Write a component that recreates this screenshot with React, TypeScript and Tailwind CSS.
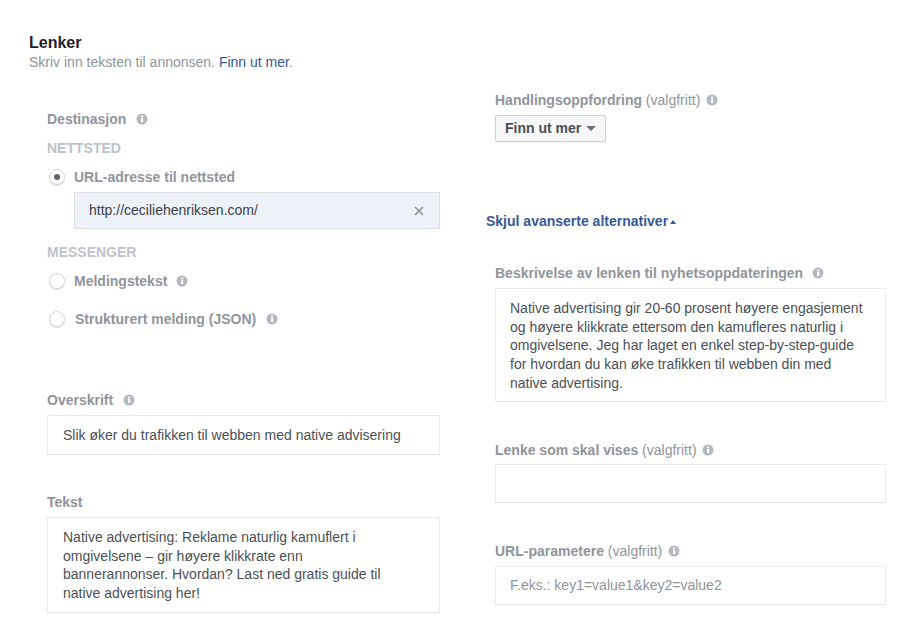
import React from "react";

function Info({ className = "" }: { className?: string }) {
  return (
    <svg width="12" height="12" viewBox="0 0 12 12" className={`inline-block shrink-0 ${className}`}>
      <circle cx="6" cy="6" r="5.5" fill="#b4b8c0" />
      <rect x="5" y="5" width="2.2" height="4" fill="#fff" />
      <rect x="5" y="2.6" width="2.2" height="1.7" fill="#fff" />
    </svg>
  );
}

function Radio({ checked = false }: { checked?: boolean }) {
  return (
    <span className="w-[16px] h-[16px] rounded-full bg-white border border-[#d5d7dc] shadow-[0_1px_1px_rgba(0,0,0,0.12)] flex items-center justify-center shrink-0">
      {checked && <span className="w-[6px] h-[6px] rounded-full bg-[#5b6270]" />}
    </span>
  );
}

function Label({ children, className = "" }: { children: React.ReactNode; className?: string }) {
  return (
    <div className={`flex items-center h-[16px] text-[14px] font-bold text-[#90949c] whitespace-nowrap ${className}`}>
      {children}
    </div>
  );
}

function Opt() {
  return <span className="font-normal whitespace-pre"> (valgfritt)</span>;
}

function Box({ children, className = "" }: { children?: React.ReactNode; className?: string }) {
  return (
    <div className={`border border-[#e9eaed] border-b-[#e3e4e8] bg-white text-[14px] text-[#4b4f56] ${className}`}>
      {children}
    </div>
  );
}

export default function App() {
  return (
    <div className="w-[899px] h-[633px] overflow-hidden bg-white font-['Liberation_Sans',Arial,sans-serif] relative">
      <div className="pt-[35px] pl-[29px]">
        <div className="text-[16px] leading-[16px] font-bold text-[#1d2129]">Lenker</div>
        <div className="text-[14px] leading-[14px] mt-[4px] text-[#90949c]">
          Skriv inn teksten til annonsen. <span className="text-[#365899]">Finn ut mer</span>.
        </div>
      </div>

      <div className="flex h-[564px]">
        {/* left column */}
        <div className="w-[393px] ml-[47px] shrink-0 pt-[42px]">
          <Label>
            Destinasjon <Info className="ml-[10px]" />
          </Label>
          <Label className="mt-[13px] text-[#bec2c9]">NETTSTED</Label>
          <div className="flex items-center h-[16px] mt-[13px] ml-[2px] text-[14px] font-bold text-[#90949c]">
            <Radio checked />
            <span className="ml-[9px]">URL-adresse til nettsted</span>
          </div>
          <div className="ml-[27px] mt-[7px] h-[37px] bg-[#edf1f8] border border-[#dddfe2] flex items-center justify-between pl-[14px] pr-[15px] text-[14px] text-[#3e424a]">
            <span>http://ceciliehenriksen.com/</span>
            <svg width="10" height="10" viewBox="0 0 10 10">
              <path d="M1 1L9 9M9 1L1 9" stroke="#8f939b" strokeWidth="1.7" />
            </svg>
          </div>
          <Label className="mt-[15px] text-[#bec2c9]">MESSENGER</Label>
          <div className="flex items-center h-[16px] mt-[13px] ml-[2px] text-[14px] font-bold text-[#90949c]">
            <Radio />
            <span className="ml-[9px]">Meldingstekst</span>
            <Info className="ml-[9px]" />
          </div>
          <div className="flex items-center h-[16px] mt-[22px] ml-[2px] text-[14px] font-bold text-[#90949c]">
            <Radio />
            <span className="ml-[10px]">Strukturert melding (JSON)</span>
            <Info className="ml-[10px]" />
          </div>

          <Label className="mt-[65px]">
            Overskrift <Info className="ml-[10px]" />
          </Label>
          <Box className="mt-[7px] h-[40px] flex items-center pl-[15px]">
            Slik øker du trafikken til webben med native advisering
          </Box>

          <Label className="mt-[39px]">Tekst</Label>
          <Box className="mt-[7px] h-[96px] pt-[10px] pl-[15px] pr-[30px] leading-[18.7px]">
            Native advertising: Reklame naturlig kamuflert i omgivelsene – gir høyere klikkrate enn bannerannonser. Hvordan? Last ned gratis guide til native advertising her!
          </Box>
        </div>

        {/* right column */}
        <div className="w-[400px] ml-[46px] shrink-0 pt-[23px]">
          <div className="ml-[9px] w-[391px]">
            <Label>
              Handlingsoppfordring
              <Opt />
              <Info className="ml-[6px]" />
            </Label>
            <div className="mt-[7px] w-[111px] h-[27px] bg-[#f6f7f9] border border-[#ced0d4] rounded-[2px] flex items-center pl-[9px] text-[14px] font-bold text-[#4b4f56] shadow-[0_1px_1px_rgba(0,0,0,0.06)]">
              Finn ut mer
              <svg width="10" height="5" viewBox="0 0 10 5" className="ml-[5px]">
                <path d="M0 0H10L5 5Z" fill="#6b7079" />
              </svg>
            </div>
          </div>

          <div className="mt-[71px] h-[16px] flex items-center text-[14px] font-bold text-[#365899]">
            Skjul avanserte alternativer
            <svg width="6" height="4" viewBox="0 0 6 4" className="ml-[2px] mt-[1px]">
              <path d="M0 4H6L3 0Z" fill="#365899" />
            </svg>
          </div>

          <div className="ml-[9px] w-[391px]">
            <Label className="mt-[36px]">
              Beskrivelse av lenken til nyhetsoppdateringen <Info className="ml-[9px]" />
            </Label>
            <Box className="mt-[7px] h-[114px] pt-[10px] pl-[14px] pr-[20px] leading-[18.7px]">
              Native advertising gir 20-60 prosent høyere engasjement og høyere klikkrate ettersom den kamufleres naturlig i omgivelsene. Jeg har laget en enkel step-by-step-guide for hvordan du kan øke trafikken til webben din med native advertising.
            </Box>

            <Label className="mt-[40px]">
              Lenke som skal vises
              <Opt />
              <Info className="ml-[5px]" />
            </Label>
            <Box className="mt-[6px] h-[39px]" />

            <Label className="mt-[40px]">
              URL-parametere
              <Opt />
              <Info className="ml-[6px]" />
            </Label>
            <Box className="mt-[7px] h-[39px] flex items-center pl-[14px] !text-[#90949c]">
              F.eks.: key1=value1&amp;key2=value2
            </Box>
          </div>
        </div>
      </div>
    </div>
  );
}
